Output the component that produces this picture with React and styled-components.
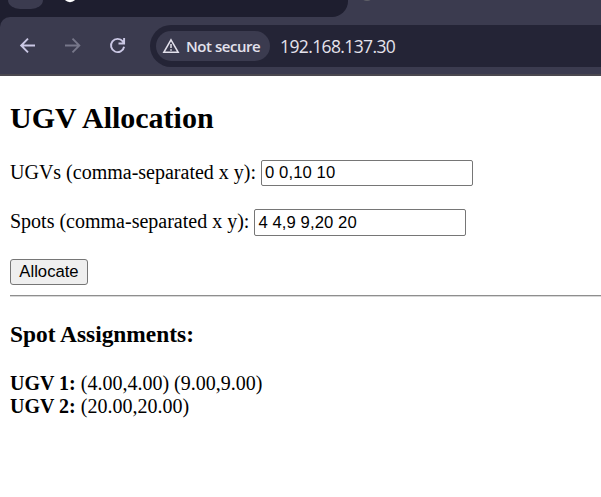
import React from "react";
import styled, { createGlobalStyle } from "styled-components";

const GlobalStyle = createGlobalStyle`
  * { box-sizing: border-box; }
  body { margin: 0; background: #fff; overflow: hidden; }
`;

const Window = styled.div`
  width: 100%;
  height: 497px;
  overflow: hidden;
  font: 20px/23px "Liberation Serif", serif;
  color: #000;
`;

const TabStrip = styled.div`
  display: flex;
  height: 17px;
  background: #3b3b4f;
`;

const TabsArea = styled.div`
  display: flex;
  width: 348px;
  height: 17px;
  padding-left: 8px;
  background: #1e1e2f;
  border-bottom-right-radius: 16px;
`;

const TabSearch = styled.div`
  width: 35px;
  height: 9px;
  background: #3b3b4f;
  border-radius: 0 0 12px 12px / 0 0 9px 9px;
`;

const Favicon = styled.svg`
  display: block;
  width: 14px;
  height: 3px;
  margin-left: ${(p) => p.$gap}px;
`;

const ToolbarBack = styled.div`
  background: #1e1e2f;
`;

const Toolbar = styled.div`
  display: flex;
  align-items: flex-start;
  height: 59px;
  padding: 8px 0 0 16px;
  background: #3b3b4f;
  border-bottom: 2px solid #4a484f;
  border-top-left-radius: 10px;
`;

const NavButton = styled.div`
  width: 24px;
  height: 42px;
  margin-right: 21px;
  padding-top: 9px;
  color: ${(p) => (p.$disabled ? "#77778a" : "#cbc8e5")};

  svg { display: block; }
`;

const AddressBar = styled.div`
  display: flex;
  align-items: center;
  flex: 1;
  height: 42px;
  margin-left: -1px;
  padding-left: 6px;
  background: #242436;
  border-radius: 21px 0 0 21px;
`;

const SecurityChip = styled.div`
  display: flex;
  align-items: center;
  width: 114px;
  height: 30px;
  padding-left: 6px;
  border-radius: 15px;
  background: #3b3b4f;
  color: #e3e1ec;
  font: 600 15px/20px "Open Sans", sans-serif;
  white-space: nowrap;
`;

const ChipLabel = styled.span`
  margin: -1px 0 0 6px;
  letter-spacing: -0.45px;
`;

const Address = styled.span`
  margin-left: 10px;
  color: #e4e2ec;
  font: 17.5px/24px "Open Sans", sans-serif;
  letter-spacing: -0.62px;
`;

const Page = styled.main`
  padding: 25px 0 0 10px;
`;

const Title = styled.h2`
  margin: 0;
  font-size: 30px;
  line-height: 34px;
`;

const Field = styled.label`
  display: flex;
  align-items: flex-start;
  height: 27px;
  margin-top: ${(p) => p.$top}px;
  white-space: pre;
`;

const Caption = styled.span`
  margin-right: 5px;
  padding-top: 1px;
`;

const TextInput = styled.input`
  width: 212px;
  height: ${(p) => p.$height}px;
  padding: 1px 3px;
  border: 1px solid #767676;
  border-radius: 2px;
  outline: none;
  background: #fff;
  color: #000;
  font: 16.667px "Liberation Sans", sans-serif;
  letter-spacing: 0.09px;
`;

const AllocateButton = styled.button`
  display: block;
  width: 78px;
  height: 26px;
  margin-top: 23px;
  padding: 0;
  border: 1px solid #767676;
  border-radius: 3px;
  background: #efefef;
  color: #000;
  font: 16.667px "Liberation Sans", sans-serif;
`;

const Divider = styled.hr`
  height: 2px;
  margin: 10px 0 0;
  border: 0;
  border-top: 1px solid #8e8e8e;
  border-bottom: 1px solid #d8d8d8;
`;

const Subtitle = styled.h3`
  margin: 24px 0 24px;
  font-size: 23.4px;
  line-height: 27px;
`;

const Assignment = styled.div`
  white-space: nowrap;
`;

const assignments = [
  { name: "UGV 1:", spots: "(4.00,4.00) (9.00,9.00)" },
  { name: "UGV 2:", spots: "(20.00,20.00)" },
];

const ArrowIcon = ({ forward }) => (
  <svg width="24" height="24" viewBox="0 0 24 24" fill="none" stroke="currentColor" strokeWidth="1.9">
    {forward ? (
      <path d="M4 11.5H18M11.5 4.7L18.3 11.5L11.5 18.3" />
    ) : (
      <path d="M19 11.5H5M12 4.7L5.2 11.5L12 18.3" />
    )}
  </svg>
);

const ReloadIcon = () => (
  <svg width="24" height="24" viewBox="0 0 24 24" fill="none" stroke="currentColor" strokeWidth="1.9">
    <path d="M18.1 12.7A6.6 6.6 0 1 1 16.8 7.4L18 9M18.1 4V9.5H12.5" />
  </svg>
);

const WarningIcon = () => (
  <svg width="18" height="18" viewBox="0 0 18 18" fill="none" stroke="currentColor" strokeWidth="1.5">
    <path d="M9 2.8L16.2 15.3H1.8Z" />
    <path d="M9 7V11M9 12.2V13.7" />
  </svg>
);

export default function App() {
  return (
    <Window>
      <GlobalStyle />
      <TabStrip>
        <TabsArea>
          <TabSearch />
          <Favicon $gap={20} viewBox="0 0 14 3">
            <circle cx="7" cy="-5" r="7.2" fill="#fff" />
          </Favicon>
        </TabsArea>
        <Favicon $gap={12} viewBox="0 0 14 3">
          <circle cx="7" cy="-6" r="7" fill="#5f6068" />
        </Favicon>
      </TabStrip>
      <ToolbarBack>
        <Toolbar>
          <NavButton><ArrowIcon /></NavButton>
          <NavButton $disabled><ArrowIcon forward /></NavButton>
          <NavButton><ReloadIcon /></NavButton>
          <AddressBar>
            <SecurityChip>
              <WarningIcon />
              <ChipLabel>Not secure</ChipLabel>
            </SecurityChip>
            <Address>192.168.137.30</Address>
          </AddressBar>
        </Toolbar>
      </ToolbarBack>
      <Page>
        <Title>UGV Allocation</Title>
        <Field $top={25}>
          <Caption>UGVs (comma-separated x y):</Caption>
          <TextInput $height={26} defaultValue="0 0,10 10" />
        </Field>
        <Field $top={22}>
          <Caption>Spots (comma-separated x y):</Caption>
          <TextInput $height={27} defaultValue="4 4,9 9,20 20" />
        </Field>
        <AllocateButton>Allocate</AllocateButton>
        <Divider />
        <Subtitle>Spot Assignments:</Subtitle>
        {assignments.map((a) => (
          <Assignment key={a.name}>
            <b>{a.name}</b> {a.spots}
          </Assignment>
        ))}
      </Page>
    </Window>
  );
}
